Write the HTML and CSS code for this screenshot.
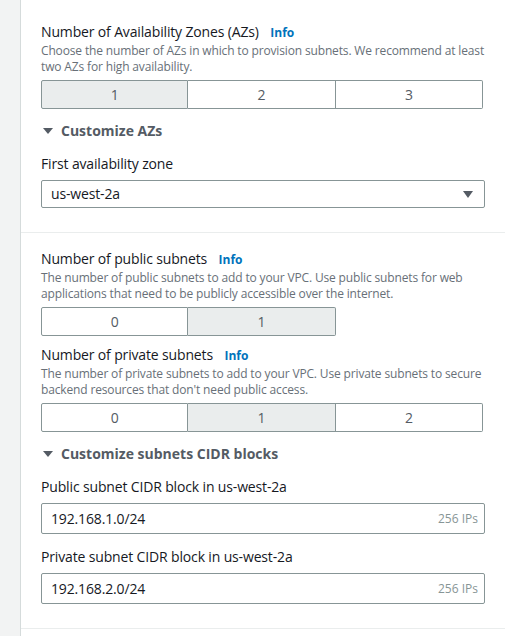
FILE: index.html
```html
<!DOCTYPE html>
<html>
<head>
<meta charset="utf-8">
<link rel="stylesheet" href="styles.css">
</head>
<body>
<div class="layout">
  <div class="rail"></div>
  <main class="content">
    <section class="section first">
      <div class="label">Number of Availability Zones (AZs) <a class="info">Info</a></div>
      <div class="desc">Choose the number of AZs in which to provision subnets. We recommend at least two AZs for high availability.</div>
      <div class="segments">
        <div class="seg selected">1</div>
        <div class="seg">2</div>
        <div class="seg">3</div>
      </div>
      <div class="expander"><span class="caret-down"></span>Customize AZs</div>
      <div class="label field-label">First availability zone</div>
      <div class="select">
        <span>us-west-2a</span>
        <span class="select-caret"></span>
      </div>
    </section>
    <section class="section second">
      <div class="label">Number of public subnets <a class="info">Info</a></div>
      <div class="desc">The number of public subnets to add to your VPC. Use public subnets for web applications that need to be publicly accessible over the internet.</div>
      <div class="segments two">
        <div class="seg">0</div>
        <div class="seg selected">1</div>
      </div>
      <div class="label group-label">Number of private subnets <a class="info">Info</a></div>
      <div class="desc">The number of private subnets to add to your VPC. Use private subnets to secure backend resources that don't need public access.</div>
      <div class="segments">
        <div class="seg">0</div>
        <div class="seg selected">1</div>
        <div class="seg">2</div>
      </div>
      <div class="expander"><span class="caret-down"></span>Customize subnets CIDR blocks</div>
      <div class="label field-label">Public subnet CIDR block in us-west-2a</div>
      <div class="input"><span>192.168.1.0/24</span><span class="suffix">256 IPs</span></div>
      <div class="label field-label">Private subnet CIDR block in us-west-2a</div>
      <div class="input"><span>192.168.2.0/24</span><span class="suffix">256 IPs</span></div>
    </section>
  </main>
</div>
</body>
</html>
```
FILE: styles.css
```css
html, body {
  margin: 0;
  padding: 0;
  background: #ffffff;
}
body {
  font-family: "Open Sans", "Noto Sans", sans-serif;
  color: #16191f;
  font-size: 14px;
  line-height: 20px;
  letter-spacing: -0.15px;
}
.layout {
  display: flex;
  min-height: 636px;
}
.rail {
  width: 20px;
  flex: 0 0 20px;
  background: #f2f3f3;
  border-right: 1px solid #d5dbdb;
}
.content {
  flex: 1;
  min-width: 0;
}
.section {
  padding: 0 20px 24px 20px;
  border-bottom: 1px solid #eaeded;
}
.section.first {
  padding-top: 22px;
}
.section.second {
  padding-top: 16px;
}
.label {
  font-size: 14px;
  line-height: 20px;
  color: #16191f;
}
.info {
  font-size: 12px;
  font-weight: 700;
  color: #0073bb;
  margin-left: 8px;
  letter-spacing: 0;
  cursor: pointer;
}
.desc {
  font-size: 12px;
  line-height: 16px;
  color: #687078;
}
.segments {
  display: grid;
  grid-template-columns: repeat(3, 1fr);
  width: 442px;
  margin-top: 5px;
}
.seg {
  height: 29px;
  box-sizing: border-box;
  border: 1px solid #879596;
  border-left-width: 0;
  display: flex;
  align-items: center;
  justify-content: center;
  color: #545b64;
  font-size: 14px;
  background: #fff;
}
.seg:first-child {
  border-left-width: 1px;
  border-radius: 2px 0 0 2px;
}
.seg:last-child {
  border-radius: 0 2px 2px 0;
}
.seg.selected {
  background: #eaeded;
}
.group-label {
  margin-top: 9px;
}
.expander {
  margin-top: 12px;
  font-weight: 700;
  color: #545b64;
  display: flex;
  align-items: center;
  letter-spacing: 0;
}
.caret-down {
  width: 0;
  height: 0;
  border-left: 5px solid transparent;
  border-right: 5px solid transparent;
  border-top: 6px solid #545b64;
  margin: 0 8px 0 2px;
}
.field-label {
  margin-top: 13px;
}
.select {
  margin-top: 6px;
  height: 28px;
  box-sizing: border-box;
  border: 1px solid #879596;
  border-radius: 2px;
  display: flex;
  align-items: center;
  justify-content: space-between;
  padding: 0 11px 0 9px;
  color: #16191f;
}
.select-caret {
  width: 0;
  height: 0;
  border-left: 5px solid transparent;
  border-right: 5px solid transparent;
  border-top: 7px solid #545b64;
}
.input {
  margin-top: 6px;
  height: 31px;
  box-sizing: border-box;
  border: 1px solid #879596;
  border-radius: 2px;
  display: flex;
  align-items: center;
  justify-content: space-between;
  padding: 0 6px 0 9px;
  color: #16191f;
}
.suffix {
  font-size: 12px;
  color: #879596;
  letter-spacing: 0;
}
```
